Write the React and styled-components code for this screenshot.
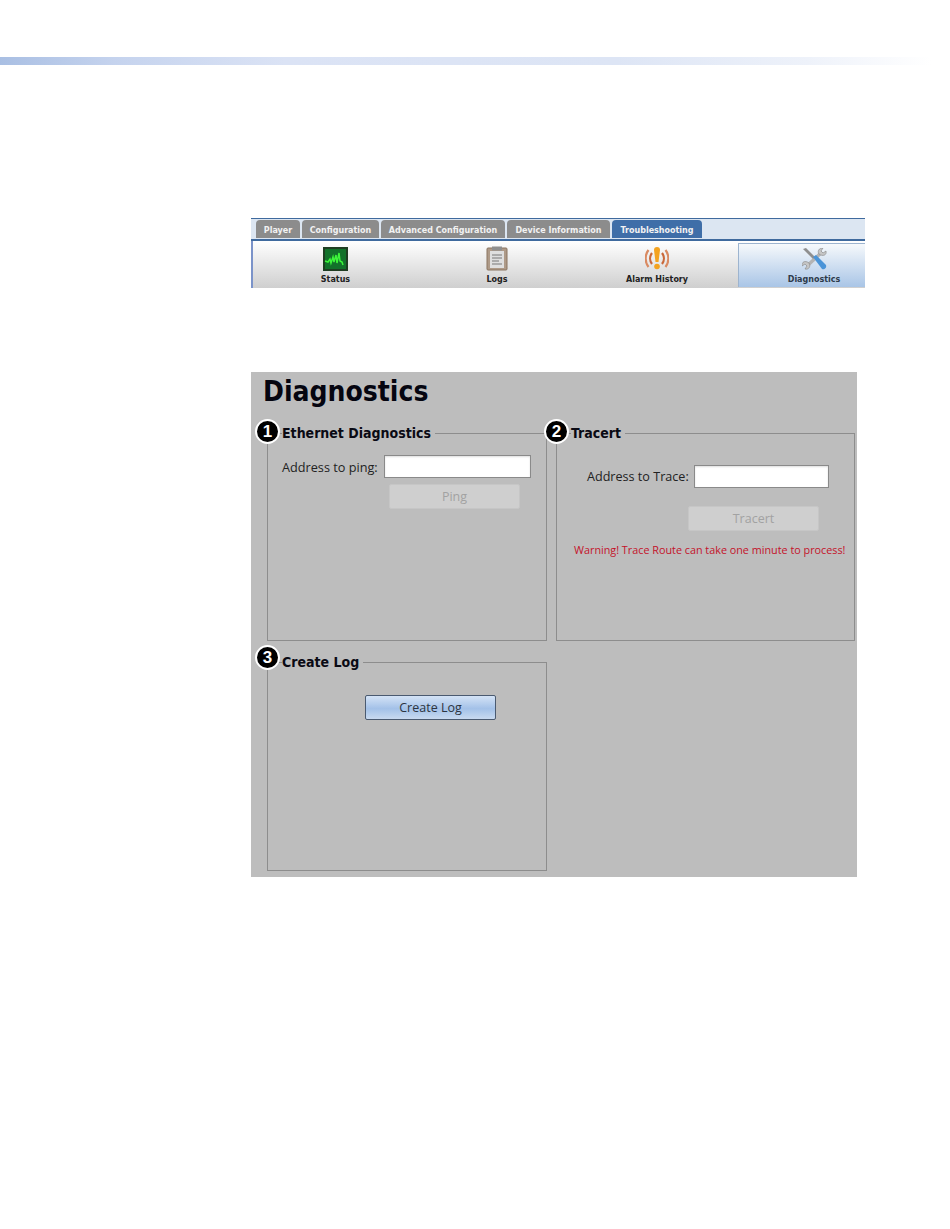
import React from "react";
import styled, { createGlobalStyle } from "styled-components";

const Global = createGlobalStyle`
  html, body { margin: 0; padding: 0; background: #fff; }
  body { font-family: "DejaVu Sans", sans-serif; }
  #root { width: 950px; height: 1229px; overflow: hidden; }
`;

const Banner = styled.div`
  margin-top: 57px;
  height: 8px;
  background: linear-gradient(90deg, #a9bfe3 0%, #c5d3ee 12%, #dbe3f5 30%, #dde5f5 65%, #eef2fa 85%, #ffffff 98%);
`;

const Shot = styled.section`
  margin: 153px 0 0 251px;
  width: 614px;
  height: 70px;
  display: flex;
  flex-direction: column;
`;

const TabStrip = styled.div`
  flex: none;
  height: 19px;
  padding: 1px 0 0 5px;
  display: flex;
  gap: 2px;
  background: #dce6f2;
  border-top: 1px solid #3f6a9e;
  border-bottom: 2px solid #3f6a9e;
`;

const Tab = styled.div`
  width: ${(p) => p.$w}px;
  height: 18px;
  box-sizing: border-box;
  padding-top: 2px;
  display: flex;
  align-items: center;
  justify-content: center;
  border-radius: 4px 4px 0 0;
  font-size: 8px;
  font-weight: 700;
  white-space: nowrap;
  color: #f2f2f2;
  background: ${(p) => (p.$active ? "#3f6ea8" : "#8c8c8c")};
`;

const Tools = styled.div`
  flex: 1;
  display: grid;
  grid-template-columns: 165px 158px 162px 127px;
  background: linear-gradient(#ffffff, #cfcfcf);
  border-left: 2px solid #7b93c9;
`;

const Tool = styled.div`
  display: flex;
  flex-direction: column;
  align-items: center;
  gap: 4px;
  padding-top: 5px;
  font-size: 8px;
  font-weight: 700;
  color: #222;
  ${(p) =>
    p.$active &&
    `
    margin-top: 2px;
    margin-bottom: 1px;
    padding: 2px 0 0 24px;
    box-sizing: border-box;
    color: #2d3a4a;
    border: 1px solid #9db4cf;
    border-right: none;
    border-bottom: none;
    background: linear-gradient(#f6f9fc, #a9c5e6);
  `}
`;

const IconSlot = styled.div`
  height: 25px;
  display: flex;
  align-items: center;
  justify-content: center;
`;

const Panel = styled.section`
  margin: 84px 0 0 251px;
  width: 606px;
  height: 505px;
  box-sizing: border-box;
  padding: 2px 2px 0 12px;
  background: #bdbdbd;
  color: #111;
`;

const Title = styled.h1`
  margin: 0 0 23px;
  font-size: 28px;
  line-height: 36px;
  font-weight: 700;
  font-family: "DejaVu Sans Condensed", "DejaVu Sans", sans-serif;
  color: #050510;
`;

const Groups = styled.div`
  display: grid;
  grid-template-columns: 280px 299px;
  grid-template-rows: 208px 209px;
  column-gap: 9px;
  row-gap: 21px;
  margin-left: 4px;
`;

const Group = styled.div`
  position: relative;
  box-sizing: border-box;
  border: 1px solid #8d8d8d;
`;

const Legend = styled.div`
  position: absolute;
  top: -9px;
  left: 14px;
  padding-right: 4px;
  background: #bdbdbd;
  font-family: "DejaVu Sans Condensed", "DejaVu Sans", sans-serif;
  font-size: 14px;
  line-height: 17px;
  font-weight: 700;
  color: #0a0a14;
`;

const Badge = styled.span`
  position: absolute;
  left: -27px;
  top: ${(p) => p.$top}px;
  width: 25px;
  height: 25px;
  box-sizing: border-box;
  border: 2px solid #fff;
  border-radius: 50%;
  background: #000;
  color: #fff;
  display: flex;
  align-items: center;
  justify-content: center;
  font-size: 17px;
  font-weight: 700;
  font-family: "Liberation Sans", sans-serif;
`;

const Body = styled.div`
  display: flex;
  flex-direction: column;
  align-items: flex-start;
  padding: ${(p) => p.$top}px 0 0 ${(p) => p.$left}px;
`;

const FieldRow = styled.div`
  display: flex;
  align-items: center;
  gap: ${(p) => p.$gap}px;
`;

const Label = styled.span`
  font-family: "Open Sans", sans-serif;
  font-size: ${(p) => p.$size}px;
  color: #222;
  white-space: nowrap;
`;

const Input = styled.div`
  width: ${(p) => p.$w}px;
  height: 23px;
  box-sizing: border-box;
  background: #fff;
  border: 1px solid #8a8a8a;
  box-shadow: inset 0 1px 2px #ddd;
`;

const Button = styled.div`
  width: 131px;
  height: 25px;
  box-sizing: border-box;
  margin: ${(p) => p.$top}px 0 0 ${(p) => p.$left}px;
  display: flex;
  align-items: center;
  justify-content: center;
  border-radius: 2px;
  font-family: "Open Sans", sans-serif;
  font-size: 12.5px;
  color: ${(p) => (p.$primary ? "#2c3440" : "#a2a2a2")};
  background: ${(p) =>
    p.$primary ? "linear-gradient(#d4e3f6, #a3c1e8 55%, #c8daf0)" : "#cfcfcf"};
  border: 1px solid ${(p) => (p.$primary ? "#4a5a70" : "#c6c6c6")};
`;

const Warning = styled.div`
  margin: 11px 0 0 -13px;
  font-family: "Open Sans", sans-serif;
  font-size: 10.8px;
  color: #c4122a;
  white-space: nowrap;
`;

const Status = () => (
  <svg width="25" height="24" viewBox="0 0 25 24">
    <rect width="25" height="24" fill="#1f3d22" />
    <rect x="2" y="2" width="21" height="20" fill="#12722a" />
    <path d="M2 14l3 1 2-3 1 4 2-6 1 5 2-7 1 8 2-10 1 8 2 1 1 3" fill="none" stroke="#3df53a" strokeWidth="1.5" />
  </svg>
);

const Clipboard = () => (
  <svg width="22" height="25" viewBox="0 0 22 25">
    <rect x="1" y="2" width="20" height="22" rx="1" fill="#ae9a88" stroke="#8a7460" />
    <rect x="4" y="5" width="14" height="17" fill="#dfdfdf" />
    <rect x="6" y="0.5" width="10" height="4" fill="#8f8f8f" />
    <path d="M6 9h10M6 12h10M6 15h7M6 18h10" stroke="#9a9a9a" strokeWidth="1.3" />
  </svg>
);

const Alarm = () => (
  <svg width="24" height="23" viewBox="0 0 24 23" fill="none">
    <path d="M7 6a9 9 0 0 0 0 11M17 6a9 9 0 0 1 0 11" stroke="#c9683a" strokeWidth="2.2" />
    <path d="M3.500 3a14 14 0 0 0 0 17M20.500 3a14 14 0 0 1 0 17" stroke="#d98a62" strokeWidth="2.2" />
    <path d="M9 3a3 3 0 0 1 6 0l-1.500 12h-3z" fill="#f3a21f" />
    <circle cx="12" cy="19.500" r="2.800" fill="#f3a21f" />
  </svg>
);

const Wrench = () => (
  <svg width="25" height="22" viewBox="0 0 25 22" fill="none">
    <path d="M5 18 20 4" stroke="#b4b4b4" strokeWidth="3.400" />
    <path d="M17 6c-2-3 0-6 4-6l-2 3 2 2 3-2c1 4-3 6-7 3z" fill="#c6c6c6" stroke="#858585" strokeWidth=".6" />
    <path d="M7 15c2 3 0 7-4 6l2-3-2-2-3 2c-.500-4 3-6 7-3z" fill="#c6c6c6" stroke="#858585" strokeWidth=".6" />
    <path d="M1 1l3-1 9 9-2 2z" fill="#8f8f8f" />
    <path d="M11 9l3-2 10 10c1 3-2 5-4 4z" fill="#4a94d8" />
  </svg>
);

const tabs = [
  ["Player", 44],
  ["Configuration", 77],
  ["Advanced Configuration", 124],
  ["Device Information", 103],
  ["Troubleshooting", 90, true],
];

export default function App() {
  return (
    <>
      <Global />
      <Banner />
      <Shot>
        <TabStrip>
          {tabs.map(([t, w, active]) => (
            <Tab key={t} $w={w} $active={active}>{t}</Tab>
          ))}
        </TabStrip>
        <Tools>
          <Tool><IconSlot><Status /></IconSlot>Status</Tool>
          <Tool><IconSlot><Clipboard /></IconSlot>Logs</Tool>
          <Tool><IconSlot><Alarm /></IconSlot>Alarm History</Tool>
          <Tool $active><IconSlot><Wrench /></IconSlot>Diagnostics</Tool>
        </Tools>
      </Shot>
      <Panel>
        <Title>Diagnostics</Title>
        <Groups>
          <Group>
            <Legend><Badge $top={-6}>1</Badge>Ethernet Diagnostics</Legend>
            <Body $top={21} $left={14}>
              <FieldRow $gap={6}>
                <Label $size={12.7}>Address to ping:</Label>
                <Input $w={147} />
              </FieldRow>
              <Button $top={6} $left={107}>Ping</Button>
            </Body>
          </Group>
          <Group>
            <Legend><Badge $top={-6}>2</Badge>Tracert</Legend>
            <Body $top={31} $left={30}>
              <FieldRow $gap={5}>
                <Label $size={12.6}>Address to Trace:</Label>
                <Input $w={135} />
              </FieldRow>
              <Button $top={18} $left={101}>Tracert</Button>
              <Warning>Warning! Trace Route can take one minute to process!</Warning>
            </Body>
          </Group>
          <Group>
            <Legend><Badge $top={-9}>3</Badge>Create Log</Legend>
            <Body $top={32} $left={97}>
              <Button $top={0} $left={0} $primary>Create Log</Button>
            </Body>
          </Group>
        </Groups>
      </Panel>
    </>
  );
}
